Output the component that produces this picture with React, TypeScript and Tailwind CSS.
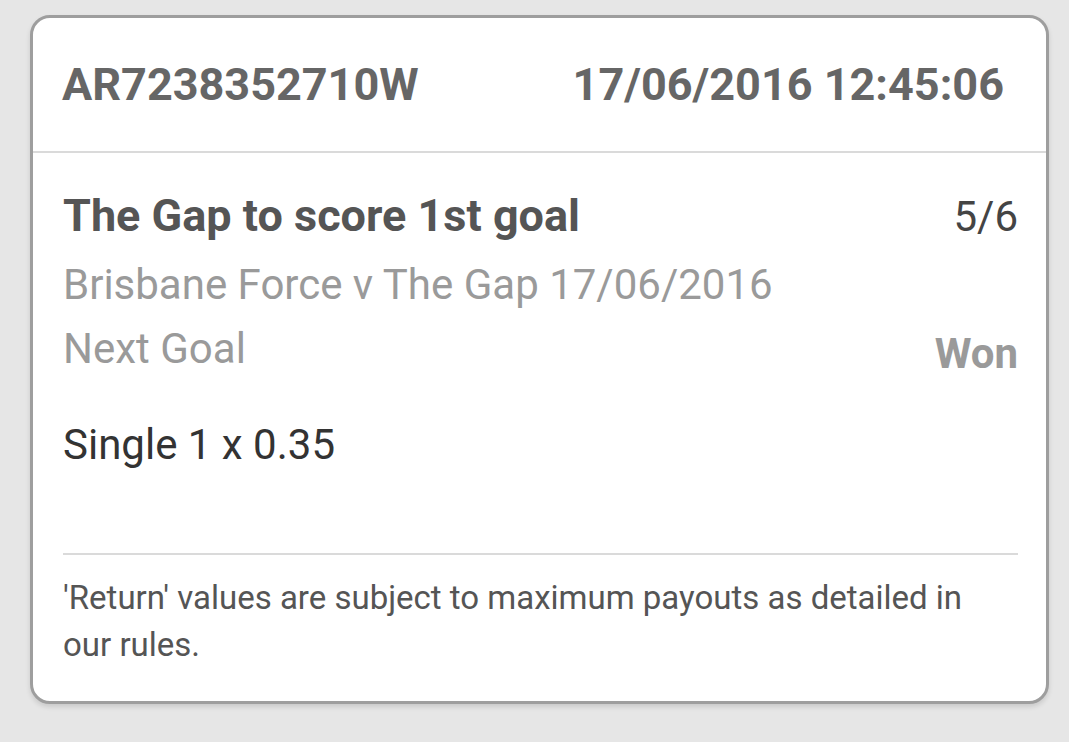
const BetReceipt = () => {
  return (
    <div className="min-h-[742px] bg-[#e6e6e6] pt-[15px] pl-[30px] font-['Roboto',sans-serif]">
      <div className="w-[1019px] h-[689px] rounded-[20px] border-[3px] border-[#9e9e9e] bg-white shadow-[0_3px_5px_rgba(0,0,0,0.12)] overflow-hidden">
        <div className="flex justify-between items-baseline border-b-2 border-[#dadada] pl-[29px] pr-[42px] pt-[44px] pb-[44px] text-[45px] leading-[45px] font-bold text-[#666]">
          <span>AR7238352710W</span>
          <span>17/06/2016 12:45:06</span>
        </div>

        <div className="pl-[30px] pr-[28px] pt-[27px]">
          <div className="flex justify-between items-baseline leading-[72px]">
            <span className="text-[45px] font-bold text-[#555]">The Gap to score 1st goal</span>
            <span className="text-[42px] text-[#444]">5/6</span>
          </div>
          <div className="text-[42px] leading-[64px] text-[#9a9a9a]">
            Brisbane Force v The Gap 17/06/2016
          </div>
          <div className="flex justify-between items-start text-[42px] leading-[64px] text-[#9a9a9a]">
            <span>Next Goal</span>
            <span className="mt-[5px] font-bold">Won</span>
          </div>
          <div className="mt-[27px] text-[42px] leading-[64px] text-[#333]">Single 1 x 0.35</div>

          <div className="mt-[76px] h-[2px] bg-[#dadada]" />

          <p className="mt-[19px] text-[33px] leading-[47px] text-[#555]">
            'Return' values are subject to maximum payouts as detailed in
            <br />
            our rules.
          </p>
        </div>
      </div>
    </div>
  );
};

export default function App() {
  return <BetReceipt />;
}
